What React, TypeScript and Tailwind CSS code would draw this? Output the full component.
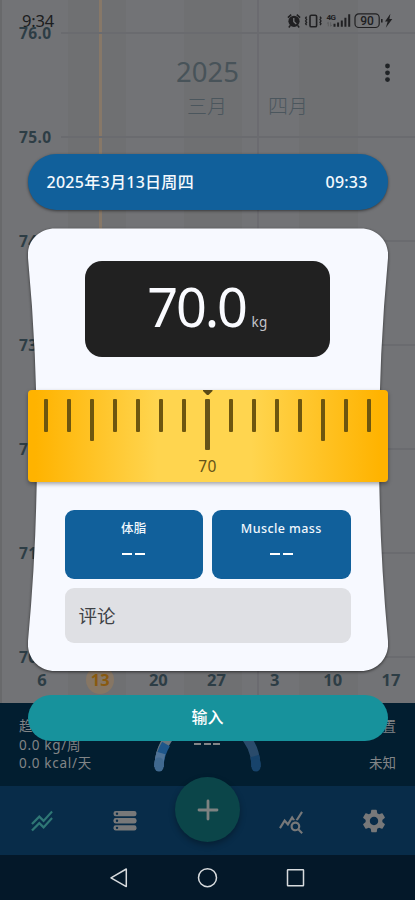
import React from "react";
import { MdStackedLineChart, MdQueryStats, MdSettings } from "react-icons/md";

const weightLabels = ["76.0", "75.0", "74.0", "73.0", "72.0", "71.0", "70.0"];
const days = ["6", "13", "20", "27", "3", "10", "17"];

function StatusIcons() {
  return (
    <svg width="107" height="18" viewBox="0 0 107 18" fill="none" className="mt-[1px] text-[#202022]">
      <circle cx="7" cy="9.300" r="5.600" fill="currentColor" />
      <path d="M.9 5.600 4.200 2.600M13.100 5.600 9.800 2.600M3.300 13.600 1.800 15.400M10.700 13.600l1.500 1.800" stroke="currentColor" strokeWidth="1.500" />
      <path d="M6.800 6v3.700l2.500 2.200" stroke="#77787a" strokeWidth="1.300" />
      <rect x="23" y="3.200" width="6.600" height="11.600" rx="1.400" stroke="currentColor" strokeWidth="1.600" />
      <path d="M19.600 4.700l-1 1.400 1 1.400-1 1.500 1 1.400-1 1.400 1 1.400M33 4.700l1 1.400-1 1.400 1 1.500-1 1.400 1 1.400-1 1.400" stroke="currentColor" strokeWidth="1.300" />
      <text x="39.500" y="8.400" fontSize="8" fontWeight="700" fill="currentColor" fontFamily="Roboto, sans-serif" textLength="9.500">4G</text>
      <path d="M41.300 10.300v4M39.900 11.700l1.400-1.400M43.600 14.300v-4M45 12.900l-1.400 1.400" stroke="#58595b" strokeWidth=".8" />
      <path d="M47.500 11.800v3M51.100 10.600v4.200M54.800 8.600v6.200M58.400 5.700v9.100M62.200 2.200v12.600" stroke="currentColor" strokeWidth="2" />
      <rect x="68" y="1.900" width="24.200" height="13.600" rx="3.800" stroke="currentColor" strokeWidth="1.200" />
      <path d="M94.800 7v3.600" stroke="currentColor" strokeWidth="1.600" />
      <text x="73.300" y="12.900" fontSize="12" fontWeight="500" fill="currentColor" fontFamily="Roboto, sans-serif" textLength="13.500">90</text>
      <path d="M103.400 1.700 98 9.400h2.700l-1.900 6.300 6.500-8.600h-2.900z" fill="currentColor" />
    </svg>
  );
}

function Chart() {
  return (
    <section className="relative h-[703px] overflow-hidden bg-[#707173]">
      <div className="absolute inset-0 flex">
        <div className="w-[2px] bg-[#68696b]" />
        <div className="w-[66px] bg-[#727376]" />
        <div className="w-[58px] bg-[#6f7072]" />
        <div className="w-[58px] bg-[#727376]" />
        <div className="w-[58px] bg-[#6f7072]" />
        <div className="w-[57px] bg-[#727376]" />
        <div className="w-[59px] bg-[#6f7072]" />
        <div className="flex-1 bg-[#727376]" />
      </div>
      <div className="absolute inset-y-0 left-[257px] w-[2px] bg-[#6b6b70]" />
      <div className="absolute bottom-[30px] top-0 left-[99px] w-[3px] bg-[#877868]" />
      <div className="absolute inset-x-0 top-[23px] flex flex-col gap-[84px]">
        {weightLabels.map((l) => (
          <div key={l} className="flex h-5 items-center pl-[19px]">
            <span className="w-[42px] text-[15.5px] font-bold leading-5 tracking-[0.4px] text-[#2d3d45]">{l}</span>
            <div className="h-[2px] flex-1 bg-[#6a6b6f]" />
          </div>
        ))}
      </div>
      <header className="absolute inset-x-0 top-0">
        <div className="flex h-[40px] items-center justify-between pl-[22px] pr-[21px]">
          <span className="mt-[2px] text-[16.5px] tracking-[-0.2px] text-[#1c1d20]">9:34</span>
          <StatusIcons />
        </div>
        <div className="flex h-[64px] items-center justify-center text-[27.5px] text-[#485359]">
          <span>2025</span>
        </div>
        <svg className="absolute left-[381px] top-[62px]" width="12" height="22" fill="#202326">
          <circle cx="6.5" cy="4" r="2.4" /><circle cx="6.5" cy="10.8" r="2.4" /><circle cx="6.5" cy="17.6" r="2.4" />
        </svg>
        <div className="-mt-[11px] flex gap-[41px] pl-[187px] text-[20px] font-light leading-[28px] text-[#4b565d]">
          <span>三月</span><span>四月</span>
        </div>
      </header>
      <div className="absolute bottom-[9px] left-[13px] flex">
        {days.map((d) => (
          <div key={d} className="flex w-[58.15px] justify-center">
            <span className={d === "13" ? "flex h-7 w-7 items-center justify-center rounded-full bg-[#867664] text-[16.5px] font-bold text-[#895a10]" : "flex h-7 w-7 items-center justify-center text-[16.5px] font-bold text-[#2d3d45]"}>{d}</span>
          </div>
        ))}
      </div>
    </section>
  );
}

function Summary() {
  return (
    <section className="relative flex h-[83px] justify-between bg-[#021e30] px-[19px] pt-[14px] text-[13.5px] leading-[18.5px] text-[#828587]">
      <div className="tracking-[0.7px]">
        <p>趋势</p>
        <p>0.0 kg/周</p>
        <p>0.0 kcal/天</p>
      </div>
      <svg className="absolute left-[147px] top-0" width="120" height="83" fill="none" strokeWidth="9">
        <path d="M12 64A48.5 48.5 0 0 1 109 64" stroke="#2a4b6b" />
        <path d="M12 64A48.5 48.5 0 0 1 34 23" stroke="#69777f" />
        <path d="M12 64A48.5 48.5 0 0 1 19 41" stroke="#1e568a" />
        <path d="M12 64A48.5 48.5 0 0 1 14 50" stroke="#4f7397" />
        <path d="M12 59v5" stroke="#40698f" strokeLinecap="round" />
        <path d="M107.7 53Q109 58 109 64" stroke="#17436b" />
        <path d="M109 60v4" stroke="#17436b" strokeLinecap="round" />
      </svg>
      <div className="absolute left-[194px] top-[40px] flex gap-[2.5px]">
        <i className="h-[1.5px] w-[7px] bg-[#828587]" /><i className="h-[1.5px] w-[7px] bg-[#828587]" /><i className="h-[1.5px] w-[7px] bg-[#828587]" />
      </div>
      <div className="text-right">
        <p>位置</p>
        <p className="mt-[18px]">未知</p>
      </div>
    </section>
  );
}

function NavBar() {
  return (
    <nav className="relative flex h-[69px] bg-[#082c49] text-[#777879]">
      <div className="flex flex-1 items-center justify-center pt-[1px] text-[#2f7775]"><MdStackedLineChart size={26} /></div>
      <div className="flex flex-1 items-center justify-center">
        <svg width="24" height="20" viewBox="0 0 24 20" fill="currentColor">
          <rect x=".5" y="0" width="23" height="5.3" rx="2.2" /><rect x=".5" y="7.1" width="23" height="5.3" rx="2.2" /><rect x=".5" y="14.2" width="23" height="5.3" rx="2.2" />
          <g fill="#082c49"><circle cx="4" cy="2.65" r="1.2" /><circle cx="4" cy="9.75" r="1.2" /><circle cx="4" cy="16.85" r="1.2" /></g>
        </svg>
      </div>
      <div className="flex-1" />
      <div className="flex flex-1 items-center justify-center pt-[2px]"><MdQueryStats size={26} /></div>
      <div className="flex flex-1 items-center justify-center"><MdSettings size={28} /></div>
      <div className="absolute left-[175px] top-[-9px] flex h-[65px] w-[65px] items-center justify-center rounded-full bg-[#0b4549] shadow-[0_3px_6px_rgba(0,0,0,.3)]">
        <svg width="22" height="22" stroke="#7d8281" strokeWidth="2.8" strokeLinecap="round"><path d="M11 2v18M2 11h18" /></svg>
      </div>
    </nav>
  );
}

function SystemBar() {
  return (
    <footer className="h-[45px] bg-[#041829]">
      <svg width="415" height="45" fill="none" stroke="#d8dbde" strokeWidth="1.5" strokeLinejoin="round">
        <path d="M111 22.8 126.3 14v17.6z" />
        <circle cx="207.5" cy="22.7" r="9" />
        <rect x="287.5" y="14.8" width="16" height="16" rx=".5" />
      </svg>
    </footer>
  );
}

function Ruler() {
  return (
    <div className="relative mt-[33px] h-[92px] w-full rounded-[4px] bg-[linear-gradient(90deg,#ffb300_2%,#ffd54f_36%,#ffd54f_62%,#ffb300_98%)] shadow-[0_2px_4px_rgba(0,0,0,.35)]">
      <div className="flex justify-between px-[16.5px] pt-[9px]">
        {Array.from({ length: 15 }, (_, i) => (
          <div
            key={i}
            className={
              i === 7
                ? "h-[51px] w-[5px] rounded-[1px] bg-[#665317]"
                : i === 2 || i === 12
                ? "h-[42px] w-[4px] rounded-[1px] bg-[#6e560f]"
                : "h-[33px] w-[4px] rounded-[1px] bg-[#6e560f]"
            }
          />
        ))}
      </div>
      <svg className="absolute left-[175px] top-0" width="10" height="6" fill="#5b4a15"><path d="M0 0h9.5v1L5.5 5H4L0 1z" /></svg>
      <p className="mt-[6px] text-center text-[15.5px] leading-5 tracking-[0.3px] text-[#665317]">70</p>
    </div>
  );
}

function Dashes() {
  return (
    <div className="flex gap-[3px]">
      <i className="h-[2px] w-[10px] bg-white" /><i className="h-[2px] w-[10px] bg-white" />
    </div>
  );
}

function Metric({ label }: { label: string }) {
  return (
    <div className="flex h-[69px] flex-1 flex-col items-center rounded-[9px] bg-[#11609b] pt-[10px] text-[12.5px] font-medium leading-[17px] text-[#f0f7fd]">
      <span className={label === "体脂" ? "tracking-[0.3px]" : "tracking-[0.4px]"}>{label}</span>
      <div className="mt-[16px]"><Dashes /></div>
    </div>
  );
}

function EntryDialog() {
  return (
    <div className="absolute inset-0 flex flex-col px-[27.5px] pt-[154px]">
      <div className="flex h-[56px] shrink-0 items-center justify-between rounded-full bg-[#11609b] pl-[19px] pr-[20px] text-[16px] font-medium text-[#f4f9fd] shadow-[0_1px_3px_rgba(0,0,0,.5)]">
        <span className="tracking-[0.28px]">2025年3月13日周四</span>
        <span className="tracking-[0.2px]">09:33</span>
      </div>
      <div className="relative mt-[18px] flex h-[443px] shrink-0 flex-col items-center pt-[33px]">
        <svg className="absolute inset-0 drop-shadow-[0_1px_1.5px_rgba(0,0,0,.6)]" width="360" height="443" viewBox="0 0 360 443">
          <path d="M27 .5H333C349 .5 361.5 13 360 30Q342 221.5 360 413C361.5 430 349 443 333 443H27C11 443 -1.5 430 0 413Q18 221.5 0 30C-1.5 13 11 .5 27 .5Z" fill="#f7f9ff" />
        </svg>
        <div className="relative flex h-[96px] w-[245px] items-baseline justify-center rounded-[17px] bg-[#212121]">
          <span className="text-[54px] leading-[91px] tracking-[-2.2px] text-[#fafbff]">70.0</span>
          <span className="ml-[6px] text-[13.5px] tracking-[0.3px] text-[#c4c4cb]">kg</span>
        </div>
        <Ruler />
        <div className="relative mt-[28px] flex w-[286px] gap-[9px]">
          <Metric label="体脂" />
          <Metric label="Muscle mass" />
        </div>
        <div className="relative mt-[9px] flex h-[55px] w-[286px] items-center rounded-[9px] bg-[#dfe0e4] pl-[14px] text-[18.5px] text-[#3e4145]">评论</div>
      </div>
      <button className="mt-[24px] h-[46px] shrink-0 rounded-full bg-[#17929c] pb-[2px] text-[16px] font-medium text-white">输入</button>
    </div>
  );
}

export default function App() {
  return (
    <main className="relative h-[900px] w-[415px] overflow-hidden font-['Noto_Sans','Noto_Sans_CJK_SC',sans-serif]">
      <Chart />
      <Summary />
      <NavBar />
      <SystemBar />
      <EntryDialog />
    </main>
  );
}
